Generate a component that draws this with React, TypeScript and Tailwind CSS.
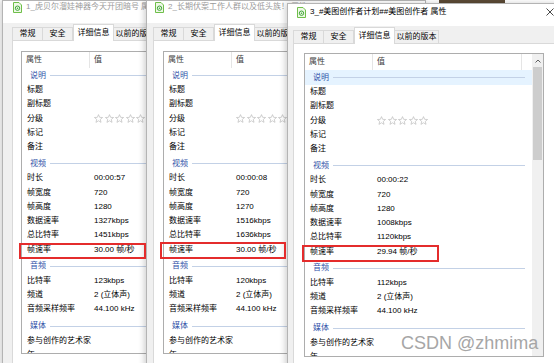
import React from 'react';

const FONT = "font-['Liberation_Sans','Noto_Sans_CJK_SC',sans-serif]";

type Item = { group?: string; label?: string; value?: string; stars?: boolean };

const buildItems = (v: string[]): Item[] => [
  { group: '说明' },
  { label: '标题' },
  { label: '副标题' },
  { label: '分级', stars: true },
  { label: '标记' },
  { label: '备注' },
  { group: '视频' },
  { label: '时长', value: v[0] },
  { label: '帧宽度', value: v[1] },
  { label: '帧高度', value: v[2] },
  { label: '数据速率', value: v[3] },
  { label: '总比特率', value: v[4] },
  { label: '帧速率', value: v[5] },
  { group: '音频' },
  { label: '比特率', value: v[6] },
  { label: '频道', value: '2 (立体声)' },
  { label: '音频采样频率', value: '44.100 kHz' },
  { group: '媒体' },
  { label: '参与创作的艺术家' },
  { label: '年' },
];

const tabs = [
  { name: '常规', w: 'w-[31px]' },
  { name: '安全', w: 'w-[31px]' },
  { name: '详细信息', w: 'w-[41px]', active: true },
  { name: '以前的版本', w: 'w-[45px]' },
];

function FileIcon() {
  return (
    <svg width="9" height="11" viewBox="0 0 9 11" className="shrink-0">
      <path d="M0.5 0.5 H6 L8.5 3 V10.5 H0.5 Z" fill="#eef8e6" stroke="#6fbf4a" />
      <circle cx="4.5" cy="6.2" r="2.2" fill="none" stroke="#3fa63a" strokeWidth="1" />
      <circle cx="4.5" cy="6.2" r="0.8" fill="#3fa63a" />
    </svg>
  );
}

function Star() {
  return (
    <svg width="9" height="9" viewBox="0 0 10 10">
      <path
        d="M5 0.7 L6.3 3.7 L9.5 3.9 L7 6 L7.8 9.3 L5 7.5 L2.2 9.3 L3 6 L0.5 3.9 L3.7 3.7 Z"
        fill="white"
        stroke="#bdbdbd"
        strokeWidth="0.8"
      />
    </svg>
  );
}

type DialogProps = {
  pos: string;
  title: string;
  active?: boolean;
  titleCls: string;
  stripCls: string;
  pageCls: string;
  listCls: string;
  redCls: string;
  values: string[];
  scroll?: boolean;
};

function Dialog({ pos, title, active, titleCls, stripCls, pageCls, listCls, redCls, values, scroll }: DialogProps) {
  const items = buildItems(values);
  let firstGroup = true;
  return (
    <div
      className={`absolute ${pos} flex flex-col bg-[#f0f0f0] border border-[#b4b4b4] shadow-[-2px_0_6px_rgba(0,0,0,0.18)] text-[8px] ${FONT}`}
    >
      {/* title bar */}
      <div className={`h-[22px] shrink-0 bg-white flex items-start ${titleCls}`}>
        <div className="flex items-center gap-[4px] h-[10px]">
          <FileIcon />
          <span className={`whitespace-nowrap leading-[10px] ${active ? 'text-black' : 'text-[#9a9a9a]'}`}>{title}</span>
        </div>
      </div>

      {/* tabs */}
      <div className={`h-[17px] shrink-0 flex items-end ${stripCls}`}>
        {tabs.map((t) =>
          t.active ? (
            <div
              key={t.name}
              className={`${t.w} h-[17px] relative top-[1px] z-10 bg-white border border-b-0 border-[#d9d9d9] flex items-center justify-center whitespace-nowrap text-black`}
            >
              {t.name}
            </div>
          ) : (
            <div
              key={t.name}
              className={`${t.w} h-[13px] bg-[#f0f0f0] border border-b-0 border-[#d9d9d9] -ml-px first:ml-0 flex items-center justify-center whitespace-nowrap text-black`}
            >
              {t.name}
            </div>
          )
        )}
      </div>

      {/* tab page */}
      <div className={`bg-white border border-[#d9d9d9] h-[340px] ${pageCls}`}>
        <div className={`w-[240px] border border-[#adadad] flex overflow-hidden bg-white ${listCls}`}>
          <div className="flex-1 min-w-0 flex flex-col">
            <div className="h-[16px] shrink-0 flex text-[#3d3d3d]">
              <div className="w-[68px] pl-[4px] border-r border-[#e5e5e5] flex items-center">属性</div>
              <div className="w-[149px] pl-[4px] border-r border-[#e5e5e5] flex items-center">值</div>
            </div>
            {items.map((it, i) => {
              if (it.group) {
                const first = firstGroup;
                firstGroup = false;
                return (
                  <div
                    key={i}
                    className={`h-[15px] shrink-0 flex items-center gap-[4px] pl-[8px] ${
                      first ? (scroll ? 'bg-[#e5f3ff]' : '') : 'mt-[2px]'
                    }`}
                  >
                    <span className="text-[#2f52a8] whitespace-nowrap">{it.group}</span>
                    <div className="flex-1 h-px bg-[#c3d1e6] mr-[7px]" />
                  </div>
                );
              }
              return (
                <div key={i} className="h-[14.25px] shrink-0 flex items-center text-black">
                  <div className="w-[68px] pl-[5px] whitespace-nowrap">{it.label}</div>
                  <div className="pl-[4px] whitespace-nowrap flex items-center gap-[1.5px]">
                    {it.stars ? (
                      <>
                        <Star />
                        <Star />
                        <Star />
                        <Star />
                        <Star />
                      </>
                    ) : (
                      it.value
                    )}
                  </div>
                </div>
              );
            })}
          </div>
          {scroll && (
            <div className="w-[11px] shrink-0 bg-[#f0f0f0] flex flex-col">
              <div className="h-[13px] flex items-center justify-center">
                <svg width="6" height="4" viewBox="0 0 6 4">
                  <path d="M0.5 3.5 L3 1 L5.5 3.5" fill="none" stroke="#606060" strokeWidth="1" />
                </svg>
              </div>
              <div className="h-[93px] mx-px bg-[#cdcdcd]" />
            </div>
          )}
        </div>
      </div>

      {/* annotation */}
      <div className={`absolute z-20 border-2 border-[#e42c2c] ${redCls}`} />

      {active && (
        <svg className="absolute left-[258px] top-[4px]" width="8" height="8" viewBox="0 0 8 8">
          <path d="M0.5 0.5 L7.5 7.5 M7.5 0.5 L0.5 7.5" stroke="#333" strokeWidth="0.9" />
        </svg>
      )}
    </div>
  );
}

export default function App() {
  return (
    <div className="relative w-[554px] h-[363px] overflow-hidden bg-white">
      <Dialog
        pos="left-[2px] top-0 w-[280px]"
        title="1_虎贝尔溜娃神器今天开团暗号 属性"
        titleCls="pl-[10px] pt-[1px]"
        stripCls="pl-[9px]"
        pageCls="ml-[9px] pl-[8px] pt-[10px]"
        listCls="h-[303px]"
        redCls="left-[16px] top-[242px] w-[127px] h-[16px]"
        values={['00:00:57', '720', '1280', '1327kbps', '1451kbps', '30.00 帧/秒', '123kbps']}
      />
      <Dialog
        pos="left-[146px] top-0 w-[280px]"
        title="2_长期伏案工作人群以及低头族！ 属性"
        titleCls="pl-[8px] pt-[1px]"
        stripCls="pl-[6px]"
        pageCls="ml-[6px] pl-[9px] pt-[10px]"
        listCls="h-[303px]"
        redCls="left-[13px] top-[241px] w-[126px] h-[17px]"
        values={['00:00:08', '720', '1270', '1516kbps', '1636kbps', '30.00 帧/秒', '120kbps']}
      />
      <div className="absolute left-[439px] top-0 w-[66px] h-[3px] bg-[#5b4a35]" />
      <Dialog
        pos="left-[287px] top-[3px] w-[290px]"
        title="3_#美图创作者计划##美图创作者 属性"
        active
        titleCls="pl-[9px] pt-[3px]"
        stripCls="pl-[5px]"
        pageCls="ml-[5px] pl-[10px] pt-[9px]"
        listCls="h-[304px]"
        redCls="left-[14px] top-[241px] w-[137px] h-[17px]"
        values={['00:00:22', '720', '1280', '1008kbps', '1120kbps', '29.94 帧/秒', '112kbps']}
        scroll
      />
      <div className="absolute left-[401px] top-[333px] text-[18px] leading-[20px] text-[#a6a6a6] font-['Liberation_Sans',sans-serif] whitespace-nowrap">
        CSDN @zhmima
      </div>
    </div>
  );
}
